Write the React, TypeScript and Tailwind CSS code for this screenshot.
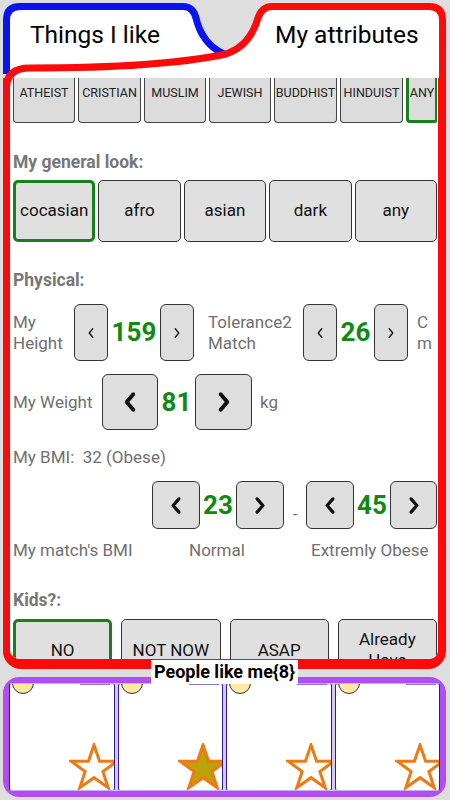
import React from "react";

const religions = [
  { name: "ATHEIST", w: "w-[62px]" },
  { name: "CRISTIAN", w: "w-[63px]" },
  { name: "MUSLIM", w: "w-[62px]" },
  { name: "JEWISH", w: "w-[62px]" },
  { name: "BUDDHIST", w: "w-[63px]" },
  { name: "HINDUIST", w: "w-[63px]" },
  { name: "ANY", w: "w-[32px]", selected: true },
];

const looks = ["cocasian", "afro", "asian", "dark", "any"];
const kids = ["NO", "NOT NOW", "ASAP", "Already Have"];

function Chev({ left, className, sw }: { left?: boolean; className: string; sw: number }) {
  return (
    <svg viewBox="0 0 12 20" className={className} fill="none" stroke="#111" strokeWidth={sw} strokeLinecap="round" strokeLinejoin="round">
      <polyline points={left ? "9,3 3,10 9,17" : "3,3 9,10 3,17"} />
    </svg>
  );
}

function Star({ filled }: { filled?: boolean }) {
  return (
    <svg viewBox="0 0 50 48" className="absolute left-[59px] top-[59px] w-[50px] h-[48px]">
      <polygon
        points="25,2 30.6,18.3 47.8,18.3 33.9,28.5 39.2,44.7 25,34.7 10.8,44.7 16.1,28.5 2.2,18.3 19.4,18.3"
        fill={filled ? "#b9a20a" : "none"}
        stroke="#ee7a14"
        strokeWidth="3"
        strokeLinejoin="miter"
      />
    </svg>
  );
}

export default function App() {
  return (
    <div className="relative w-[450px] h-[800px] bg-[#dedede] flex flex-col pl-[3px] pr-[4px] font-['Roboto',sans-serif] overflow-hidden">
      {/* tab outlines */}
      <svg className="absolute left-0 top-0 w-[450px] h-[95px] z-20 pointer-events-none" viewBox="0 0 450 95">
        <path
          d="M6.5,78 L6.5,20 Q6.5,6.5 20,6.5 L183,6.5 Q193,6.5 196,18 Q202,44 225,54 Q250,46 258,18 Q262,6.5 272,6.5 L429,6.5 Q442.5,6.5 442.5,20 L442.5,78 Z"
          fill="#fff"
        />
        <path d="M6.5,74 L6.5,20 Q6.5,6.5 20,6.5 L183,6.5 Q193,6.5 196,18 Q202,44 224,54" fill="none" stroke="#0a14f0" strokeWidth="7" />
        <path
          d="M442.5,90 L442.5,20 Q442.5,6.5 429,6.5 L272,6.5 Q262,6.5 258,18 Q250,46 226,54 Q160,68 30,68 Q6.5,68 6.5,88"
          fill="none"
          stroke="#ff0a0a"
          strokeWidth="7"
        />
      </svg>

      {/* tabs */}
      <div className="relative z-30 h-[78px] flex items-start pt-[21px] text-[24.5px] leading-[28px] text-black">
        <div className="w-[222px] pl-[27px]">Things I like</div>
        <div className="pl-[50px]">My attributes</div>
      </div>

      {/* attributes panel */}
      <div className="relative z-10 h-[591px] bg-white border-l-[7px] border-r-[8px] border-b-[10px] border-[#ff0a0a] rounded-b-[18px] overflow-hidden pl-[3px] pr-[1px]">
        <div className="flex gap-[3px] h-[45px] overflow-hidden">
          {religions.map((r) => (
            <div
              key={r.name}
              className={`${r.w} shrink-0 h-[45px] bg-[#dcdcdc] rounded-b-[4px] flex justify-center pt-[8px] text-[12.5px] leading-[14px] text-[#222] whitespace-nowrap ${
                r.selected ? "border-[3px] border-t-0 border-[#17801a]" : "border border-t-0 border-[#444]"
              }`}
            >
              {r.name}
            </div>
          ))}
        </div>

        <div className="mt-[29px] text-[17.5px] leading-[20px] font-bold text-[#777]">My general look:</div>
        <div className="mt-[8px] grid grid-cols-5 gap-[3px] h-[62px]">
          {looks.map((l, i) => (
            <div
              key={l}
              className={`bg-[#e0e0e0] rounded-[5px] flex items-center justify-center text-[17px] text-[#111] ${
                i === 0 ? "border-[3px] border-[#17801a]" : "border border-[#333]"
              }`}
            >
              {l}
            </div>
          ))}
        </div>

        <div className="mt-[28px] text-[17.5px] leading-[20px] font-bold text-[#777]">Physical:</div>

        {/* height */}
        <div className="mt-[14px] flex items-center h-[57px] text-[17px] leading-[21px] text-[#6f6f6f]">
          <div className="w-[61px]">My<br />Height</div>
          <div className="w-[34px] h-[57px] bg-[#dedede] border border-[#333] rounded-[6px] flex items-center justify-center">
            <Chev left className="w-[8px] h-[12px]" sw={2.2} />
          </div>
          <div className="w-[52px] text-center text-[26px] font-bold text-[#0e8a10]">159</div>
          <div className="w-[34px] h-[57px] bg-[#dedede] border border-[#333] rounded-[6px] flex items-center justify-center">
            <Chev className="w-[8px] h-[12px]" sw={2.2} />
          </div>
          <div className="ml-[14px] w-[95px]">Tolerance2<br />Match</div>
          <div className="w-[34px] h-[57px] bg-[#dedede] border border-[#333] rounded-[6px] flex items-center justify-center">
            <Chev left className="w-[8px] h-[12px]" sw={2.2} />
          </div>
          <div className="w-[37px] text-center text-[26px] font-bold text-[#0e8a10]">26</div>
          <div className="w-[34px] h-[57px] bg-[#dedede] border border-[#333] rounded-[6px] flex items-center justify-center">
            <Chev className="w-[8px] h-[12px]" sw={2.2} />
          </div>
          <div className="ml-[9px]">C<br />m</div>
        </div>

        {/* weight */}
        <div className="mt-[13px] flex items-center h-[56px] text-[17px] leading-[21px] text-[#6f6f6f]">
          <div className="w-[89px] whitespace-nowrap">My Weight</div>
          <div className="w-[56px] h-[56px] bg-[#dedede] border border-[#333] rounded-[6px] flex items-center justify-center">
            <Chev left className="w-[14px] h-[22px]" sw={3.6} />
          </div>
          <div className="w-[37px] text-center text-[26px] font-bold text-[#0e8a10]">81</div>
          <div className="w-[57px] h-[56px] bg-[#dedede] border border-[#333] rounded-[6px] flex items-center justify-center">
            <Chev className="w-[14px] h-[22px]" sw={3.6} />
          </div>
          <div className="ml-[8px]">kg</div>
        </div>

        <div className="mt-[17px] text-[17px] leading-[20px] text-[#6f6f6f] whitespace-pre">My BMI:  32 (Obese)</div>

        {/* bmi */}
        <div className="mt-[14px] flex items-center h-[48px] pl-[139px]">
          <div className="w-[48px] h-[48px] bg-[#dedede] border border-[#333] rounded-[6px] flex items-center justify-center">
            <Chev left className="w-[12px] h-[19px]" sw={3.4} />
          </div>
          <div className="w-[36px] text-center text-[26px] font-bold text-[#0e8a10]">23</div>
          <div className="w-[48px] h-[48px] bg-[#dedede] border border-[#333] rounded-[6px] flex items-center justify-center">
            <Chev className="w-[12px] h-[19px]" sw={3.4} />
          </div>
          <div className="w-[22px] self-end pb-[2px] text-center text-[16px] text-[#6f6f6f]">-</div>
          <div className="w-[48px] h-[48px] bg-[#dedede] border border-[#333] rounded-[6px] flex items-center justify-center">
            <Chev left className="w-[12px] h-[19px]" sw={3.4} />
          </div>
          <div className="w-[36px] text-center text-[26px] font-bold text-[#0e8a10]">45</div>
          <div className="w-[47px] h-[48px] bg-[#dedede] border border-[#333] rounded-[6px] flex items-center justify-center">
            <Chev className="w-[12px] h-[19px]" sw={3.4} />
          </div>
        </div>

        <div className="mt-[11px] flex text-[17px] leading-[20px] text-[#6f6f6f] whitespace-nowrap">
          <div className="w-[176px]">My match's BMI</div>
          <div className="w-[122px]">Normal</div>
          <div>Extremly Obese</div>
        </div>

        <div className="mt-[30px] text-[17.5px] leading-[20px] font-bold text-[#777]">Kids?:</div>
        <div className="mt-[9px] grid grid-cols-4 gap-[9px] h-[62px]">
          {kids.map((k, i) => (
            <div
              key={k}
              className={`bg-[#e0e0e0] rounded-[5px] flex items-center justify-center text-center px-[10px] text-[17px] leading-[21px] text-[#111] ${
                i === 0 ? "border-[3px] border-[#17801a]" : "border border-[#333]"
              } ${k === "NOT NOW" ? "whitespace-nowrap" : ""}`}
            >
              {k}
            </div>
          ))}
        </div>
      </div>

      <div className="absolute z-30 left-[151px] top-[660px] w-[147px] h-[24px] bg-white flex items-center justify-center text-[18px] font-bold text-black leading-[22px] whitespace-nowrap">
        People like me{"{8}"}
      </div>

      {/* people like me */}
      <div className="mt-[8px] h-[120px] border-[6px] border-[#b24cf3] rounded-[16px] bg-[#d8c8f6] grid grid-cols-4 gap-[3px]">
        {[0, 1, 2, 3].map((i) => (
          <div key={i} className="relative bg-white border-x border-[#2e1c9e] border-y border-y-[#c4b0ee] rounded-[3px] overflow-hidden">
            <div className="absolute left-[2px] top-[-12px] w-[22px] h-[22px] rounded-full bg-[#fde7a2] border border-[#333]" />
            <div className="absolute left-[70px] top-0 w-[30px] h-[1px] bg-[#8a78d0]" />
            <Star filled={i === 1} />
          </div>
        ))}
      </div>
    </div>
  );
}
